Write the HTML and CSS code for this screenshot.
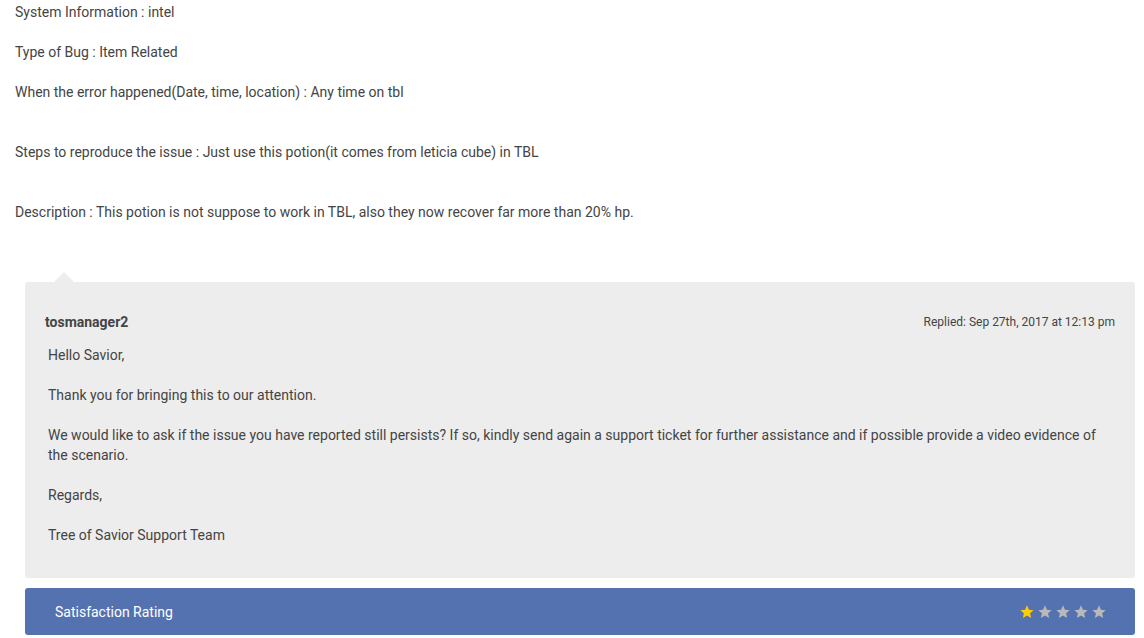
FILE: index.html
```html
<!DOCTYPE html>
<html lang="en">
<head>
    <meta charset="UTF-8">
    <title>Ticket</title>
    <link rel="stylesheet" href="styles.css">
</head>
<body>
    <div class="ticket">
        <p>System Information : intel</p>
        <p>Type of Bug : Item Related</p>
        <p class="spaced">When the error happened(Date, time, location) : Any time on tbl</p>
        <p class="spaced">Steps to reproduce the issue : Just use this potion(it comes from leticia cube) in TBL</p>
        <p>Description : This potion is not suppose to work in TBL, also they now recover far more than 20% hp.</p>
    </div>

    <div class="reply">
        <div class="reply-head">
            <span class="author">tosmanager2</span>
            <span class="date">Replied: Sep 27th, 2017 at 12:13 pm</span>
        </div>
        <div class="reply-body">
            <p>Hello Savior,</p>
            <p>Thank you for bringing this to our attention.</p>
            <p>We would like to ask if the issue you have reported still persists? If so, kindly send again a support ticket for further assistance and if possible provide a video evidence of the scenario.</p>
            <p>Regards,</p>
            <p>Tree of Savior Support Team</p>
        </div>
    </div>

    <div class="rating">
        <span>Satisfaction Rating</span>
        <div class="stars">
            <svg class="star on" viewBox="0 0 24 24"><path d="M12 2l2.9 6.6 7.1.6-5.4 4.7 1.6 7L12 17.2 5.8 20.9l1.6-7L2 9.2l7.1-.6z"/></svg>
            <svg class="star" viewBox="0 0 24 24"><path d="M12 2l2.9 6.6 7.1.6-5.4 4.7 1.6 7L12 17.2 5.8 20.9l1.6-7L2 9.2l7.1-.6z"/></svg>
            <svg class="star" viewBox="0 0 24 24"><path d="M12 2l2.9 6.6 7.1.6-5.4 4.7 1.6 7L12 17.2 5.8 20.9l1.6-7L2 9.2l7.1-.6z"/></svg>
            <svg class="star" viewBox="0 0 24 24"><path d="M12 2l2.9 6.6 7.1.6-5.4 4.7 1.6 7L12 17.2 5.8 20.9l1.6-7L2 9.2l7.1-.6z"/></svg>
            <svg class="star" viewBox="0 0 24 24"><path d="M12 2l2.9 6.6 7.1.6-5.4 4.7 1.6 7L12 17.2 5.8 20.9l1.6-7L2 9.2l7.1-.6z"/></svg>
        </div>
    </div>
</body>
</html>
```

FILE: styles.css
```css
body {
    font-family: Roboto, "Liberation Sans", sans-serif;
    font-size: 14px;
    line-height: 20px;
    color: #444;
    margin: 0;
    padding: 2px 9px 0 15px;
    background-color: #fff;
}
p {
    margin: 0 0 20px;
}
p.spaced {
    margin-bottom: 40px;
}
.ticket {
    padding-bottom: 40px;
}
.reply {
    position: relative;
    margin-left: 10px;
    background: #ededed;
    border-radius: 3px;
    padding: 30px 20px 33px 20px;
}
.reply:before {
    content: "";
    position: absolute;
    top: -10px;
    left: 29px;
    border-left: 10px solid transparent;
    border-right: 10px solid transparent;
    border-bottom: 10px solid #ededed;
}
.reply-head {
    display: flex;
    justify-content: space-between;
    align-items: center;
    margin-bottom: 13px;
}
.author {
    font-weight: bold;
    color: #444;
}
.date {
    font-size: 12px;
}
.reply-body {
    padding-left: 3px;
}
.reply-body p:last-child {
    margin-bottom: 0;
}
.rating {
    margin: 10px 0 0 10px;
    height: 47px;
    background: #5572b0;
    border-radius: 3px;
    color: #fff;
    display: flex;
    align-items: center;
    justify-content: space-between;
    padding: 0 28px 0 30px;
}
.stars {
    display: flex;
    gap: 2px;
}
.star {
    width: 16px;
    height: 16px;
    fill: #b9b9b9;
}
.star.on {
    fill: #ffcc00;
}
```
